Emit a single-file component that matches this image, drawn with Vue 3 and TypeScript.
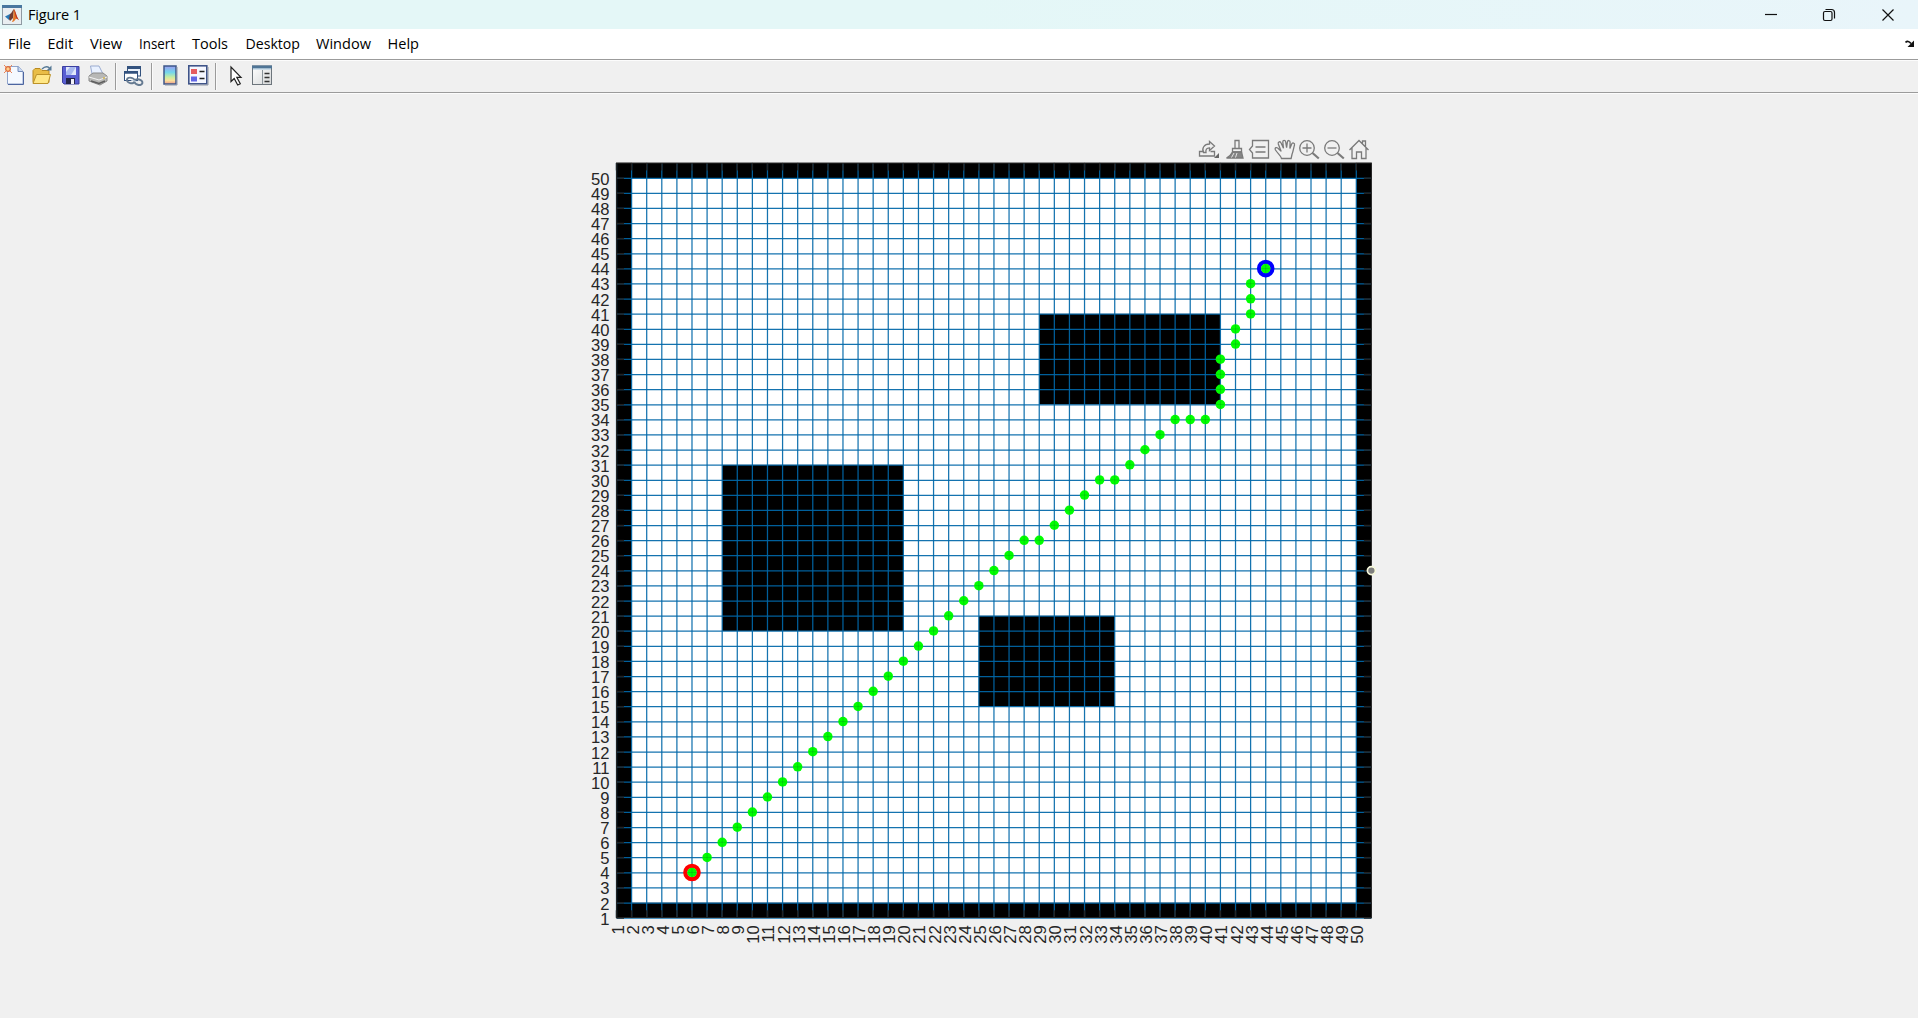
<script setup lang="ts">
interface MenuEntry {
  label: string
  left: number
  width: number
}

interface Block {
  x1: number
  y1: number
  x2: number
  y2: number
}

const menus: MenuEntry[] = [
  { label: 'File', left: 8, width: 23 },
  { label: 'Edit', left: 47.5, width: 25.5 },
  { label: 'View', left: 90, width: 32 },
  { label: 'Insert', left: 139, width: 36 },
  { label: 'Tools', left: 192, width: 36 },
  { label: 'Desktop', left: 245.5, width: 54.5 },
  { label: 'Window', left: 316, width: 55 },
  { label: 'Help', left: 387.5, width: 31.5 },
]

const pitch = 15.098
const px = (v: number): number => 616.5 + (v - 1) * pitch
const py = (v: number): number => 917.8 - (v - 1) * pitch

const ticks: number[] = Array.from({ length: 50 }, (_, i) => i + 1)

const blocks: Block[] = [
  { x1: 1, y1: 1, x2: 51, y2: 2 },
  { x1: 1, y1: 50, x2: 51, y2: 51 },
  { x1: 1, y1: 1, x2: 2, y2: 51 },
  { x1: 50, y1: 1, x2: 51, y2: 51 },
  { x1: 8, y1: 20, x2: 20, y2: 31 },
  { x1: 25, y1: 15, x2: 34, y2: 21 },
  { x1: 29, y1: 35, x2: 41, y2: 41 },
]

const diagonal: [number, number][] = Array.from({ length: 23 }, (_, i) => [6 + i, 4 + i])
const path: [number, number][] = [
  ...diagonal,
  [29, 26], [30, 27], [31, 28], [32, 29], [33, 30], [34, 30], [35, 31], [36, 32],
  [37, 33], [38, 34], [39, 34], [40, 34], [41, 35], [41, 36], [41, 37], [41, 38],
  [42, 39], [42, 40], [43, 41], [43, 42], [43, 43], [44, 44],
]
</script>

<template>
  <div class="window">
    <header class="titlebar">
      <svg class="logo" width="20" height="20" viewBox="0 0 20 20">
        <rect x=".5" y=".5" width="19" height="19" fill="#e9eef1" stroke="#8f9aa2" />
        <rect x="0" y="0" width="20" height="3" fill="#48779f" />
        <path d="M3 11.500 8 9l2 2.500L7 15z" fill="#2879b5" />
        <path d="M8 9c2-1 2.500-4 4-5l-1 9-3 3-1-2z" fill="#713b32" />
        <path d="M12 4c1.500 1 2.500 8 5 11-2-2-3-1.500-4 0s-2 2-3 2c2-3 1-9 2-13z" fill="#e57826" />
        <path d="M12 4c2 3 2 7 5 11-2-1-3-2-3.500-4z" fill="#b8302a" />
      </svg>
      <span class="title">Figure 1</span>
      <svg class="controls" width="140" height="28" viewBox="1760 0 140 28" fill="none" stroke="#111" stroke-width="1.200">
        <path d="M1765 13.500h12" />
        <rect x="1823.500" y="10.500" width="8.500" height="9" rx="1.500" />
        <path d="M1825.500 8.500h6a3 3 0 0 1 3 3v6" />
        <path d="M1882.500 8.500l11 11M1893.500 8.500l-11 11" />
      </svg>
    </header>

    <nav class="menubar">
      <svg width="440" height="30" viewBox="0 0 440 30">
        <text
          v-for="m in menus"
          :key="m.label"
          :x="m.left"
          y="20"
          :textLength="m.width"
          lengthAdjust="spacingAndGlyphs"
        >{{ m.label }}</text>
      </svg>
      <svg class="dock" width="10" height="8" viewBox="0 0 10 8">
        <path d="M.5 2.500Q3 0 6 3.500" fill="none" stroke="#111" stroke-width="1.700" />
        <path d="M9 .5v6.500H2.500z" fill="#111" />
      </svg>
    </nav>

    <div class="toolbar">
      <svg width="290" height="32" viewBox="0 60 290 32">
        <g>
          <path d="M7.500 66.500h11l4.500 5v12.500H7.500z" fill="#f5f9ff" stroke="#8fa3cb" />
          <path d="M23.500 72v12.500H8" fill="none" stroke="#4c65a0" />
          <path d="M18 66.500v5h5" fill="#c9d9f2" stroke="#7088b8" />
          <circle cx="8" cy="69" r="2.300" fill="#ffd08d" stroke="#df6a3a" stroke-width="1.300" />
          <path d="M4 65l2 2M12 65l-2 2M4 73l2-2M12 73l-2-2" stroke="#e88458" />
        </g>
        <g>
          <path d="M33 82.500v-12l2-2h5l2 2h7v12z" fill="#e9bd46" stroke="#b98a22" />
          <path d="M33 83.500l3.500-9h14L48 83.500z" fill="#ffe786" stroke="#bd9228" />
          <path d="M42 69q4-4 7.500-1" fill="none" stroke="#587a96" stroke-width="1.400" />
          <path d="M51.500 65.500v5h-5z" fill="#587a96" />
        </g>
        <g>
          <path d="M62.500 66.500h16.500v17.500H64l-1.500-1.500z" fill="#5a5fd2" stroke="#3b3fa0" />
          <path d="M66 67h10v8H66z" fill="#e1e8fb" />
          <path d="M70 67h6l-5 8h-5v-3z" fill="#a8b9ef" />
          <path d="M66 78h9v6h-9z" fill="#24264a" />
          <path d="M71 79h3v5h-3z" fill="#f3f3fa" />
        </g>
        <g>
          <path d="M92.500 76l-2-10h8.500l4.500 9z" fill="#e9f1ff" stroke="#9aabd0" />
          <path d="M89 76l4-3h10l4 3v5l-7 4-11-4z" fill="#b8b8b6" stroke="#8a8a8a" />
          <path d="M89 77l10 3 8-3" fill="none" stroke="#f4f4f4" />
          <path d="M91 81l8 2.500 6-2.500" fill="none" stroke="#5e5e5e" stroke-width="1.400" />
          <circle cx="104" cy="78" r="1" fill="#cfb24b" />
        </g>
        <g fill="#fff" stroke="#33527e">
          <rect x="127.500" y="66.500" width="13" height="9.500" fill="#eaf1fa" />
          <path d="M127 67.500h14" stroke-width="3" />
          <rect x="124.500" y="71.500" width="13" height="9" />
          <path d="M124 72.500h14" stroke-width="2.500" />
          <g fill="none" stroke="#657a91" stroke-width="2">
            <ellipse cx="131" cy="80.500" rx="4" ry="2.700" transform="rotate(15 131 80)" />
            <ellipse cx="138.500" cy="82" rx="4" ry="2.700" transform="rotate(15 138 82)" />
          </g>
          <path d="M131 80l7 2" stroke="#d8e3ed" stroke-width="1" />
        </g>
        <defs>
          <linearGradient id="spectrum" x1="0" y1="0" x2="0" y2="1">
            <stop offset="0" stop-color="#9d9cf0" />
            <stop offset=".35" stop-color="#72d6ed" />
            <stop offset=".62" stop-color="#c7eda0" />
            <stop offset=".8" stop-color="#fae19b" />
            <stop offset="1" stop-color="#ec9a8b" />
          </linearGradient>
          <linearGradient id="panel" x1="0" y1="0" x2="1" y2="1">
            <stop offset="0" stop-color="#fff" />
            <stop offset="1" stop-color="#d5d7d8" />
          </linearGradient>
        </defs>
        <rect x="164" y="66" width="12" height="18" fill="url(#spectrum)" stroke="#3d5789" stroke-width="1.500" />
        <path d="M177 67v18h-12" fill="none" stroke="#8d95a4" />
        <g>
          <rect x="188.800" y="65.800" width="18" height="18" fill="#f5f7ff" stroke="#3f5489" stroke-width="1.600" />
          <path d="M208 67v18h-18" fill="none" stroke="#8d95a4" />
          <path d="M191 69h6v5h-6z" fill="#e45c60" />
          <path d="M191 76.500h6v5h-6z" fill="#6266e4" />
          <path d="M199.500 71.500h5M199.500 78.500h5" stroke="#222" stroke-width="1.500" />
        </g>
        <path d="M231 67v14.500l3.200-3 3.500 6.500 2.600-1.200-3.500-6.500h4.200z" fill="#fff" stroke="#222" stroke-width="1.200" />
        <g>
          <rect x="252.500" y="66" width="19" height="18.500" fill="url(#panel)" stroke="#6d757c" />
          <path d="M252 67h20" stroke="#4f7596" stroke-width="3" />
          <path d="M253 69h18" stroke="#a9c9df" />
          <path d="M262.500 70v14" stroke="#8b949a" />
          <path d="M264.500 73.500h5M264.500 77.500h5M264.500 81.500h5" stroke="#333" stroke-width="1.400" />
        </g>
        <path d="M115.500 63v27M151.500 63v27M215.500 63v27" stroke="#9b9b9b" />
        <path d="M116.500 63v27M152.500 63v27M216.500 63v27" stroke="#fafafa" />
      </svg>
    </div>

    <main class="figure">
      <svg class="axes-tools" width="180" height="24" viewBox="1195 138 180 24" fill="none" stroke="#7a7a7a" stroke-width="1.300">
        <g>
          <path d="M1203.500 151.500h-4v4.500h15v-4.500h-4" />
          <path d="M1203.500 152.500c-2-4 .5-8.500 6-8.500v-2.500l5 4.500-5 4.500v-2.700c-3 0-4 1.700-3.500 4.700z" />
          <path d="M1219 153v5h-5z" fill="#666" stroke="none" />
        </g>
        <g>
          <path d="M1235 140.500h4v8h-4zM1232.500 148.500h9v3.500h-9z" />
          <path d="M1232.500 152h9l1.500 6h-16.500q4-2 6-6z" fill="#858585" />
          <path d="M1231.500 157.500l2.500-4.500M1235.500 157.500l1.500-4.500" stroke="#ededed" stroke-width=".9" />
        </g>
        <path d="M1252.500 140.500h16v17.500h-16v-5l-3-3.500 3-3.500zM1255.500 147h10M1255.500 152h10" />
        <path d="M1281.500 158.500c-1-3.500-3.500-4.500-6-8.500-1.300-2.300 1.300-3.500 3.300-1l2.400 2.400-2.900-7.400c-.6-2.500 2-3 2.800-1l2.400 5.200-.7-6.200c0-2.100 2.600-2.100 2.900 0l.9 5.700.8-5.700c.3-2.100 2.800-1.900 2.700.2l-.2 6.300 1.800-4.500c.8-1.900 3.300-1 2.800 1-1 3.100-1.200 6.500-2.400 9l-1 4.500z" />
        <g>
          <circle cx="1307" cy="148" r="7.300" />
          <path d="M1302.500 148h9M1307 143.500v9" />
          <path d="M1312.500 153l6.300 5.500" stroke-width="2.200" />
        </g>
        <g>
          <circle cx="1332" cy="148" r="7.300" />
          <path d="M1327.500 148h9" />
          <path d="M1337.500 153l6.300 5.500" stroke-width="2.200" />
        </g>
        <path d="M1349.500 150l9.500-9.500 9.500 9.500M1352 148v10.500h4.500v-6.500h5v6.500h4.500V148M1362.500 144v-3h3v6" />
      </svg>

      <svg class="plot" width="830" height="800" viewBox="580 162 830 800">
        <rect :x="px(1)" :y="py(51)" :width="50 * pitch" :height="50 * pitch" fill="#fff" />
        <rect
          v-for="(b, i) in blocks"
          :key="'b' + i"
          :x="px(b.x1)"
          :y="py(b.y2)"
          :width="(b.x2 - b.x1) * pitch"
          :height="(b.y2 - b.y1) * pitch"
          fill="#000"
        />
        <g stroke="#0067a8" stroke-width="1.250" stroke-opacity=".92">
          <template v-for="t in ticks" :key="'g' + t">
            <line :x1="px(t)" :x2="px(t)" :y1="py(1)" :y2="py(51)" />
            <line :x1="px(1)" :x2="px(51)" :y1="py(t) + 0.300" :y2="py(t) + 0.300" />
          </template>
        </g>
        <g stroke="#232323" stroke-width="1.400">
          <template v-for="t in ticks" :key="'t' + t">
            <line :x1="px(t)" :x2="px(t)" :y1="py(1)" :y2="py(1) - 7.500" />
            <line :x1="px(t)" :x2="px(t)" :y1="py(51)" :y2="py(51) + 7.500" />
            <line :x1="px(1)" :x2="px(1) + 7.500" :y1="py(t) + 0.200" :y2="py(t) + 0.200" />
            <line :x1="px(51)" :x2="px(51) - 7.500" :y1="py(t) + 0.200" :y2="py(t) + 0.200" />
          </template>
          <rect :x="px(1)" :y="py(51) + 0.200" :width="50 * pitch" :height="50 * pitch - 0.500" fill="none" stroke-width="1" />
        </g>
        <g class="tick-text">
          <text v-for="t in ticks" :key="'y' + t" x="609.500" :y="Math.round(py(t) + 6.800)" text-anchor="end">{{ t }}</text>
          <text
            v-for="t in ticks"
            :key="'x' + t"
            :transform="`translate(${Math.round(px(t) + 7)} 925.300) rotate(-90)`"
            text-anchor="end"
          >{{ t }}</text>
        </g>
        <circle :cx="px(6)" :cy="py(4)" r="6.700" fill="none" stroke="#f00" stroke-width="4.200" />
        <circle :cx="px(44)" :cy="py(44)" r="6.700" fill="none" stroke="#00f" stroke-width="4.200" />
        <g v-for="(p, i) in path" :key="'p' + i">
          <circle :cx="px(p[0])" :cy="py(p[1])" r="4.750" fill="#0f0" />
          <path :d="`M${px(p[0]) - 4} ${py(p[1])}h8M${px(p[0])} ${py(p[1]) - 4}v8`" stroke="#007a20" stroke-opacity=".28" />
        </g>
        <circle cx="1371.400" cy="570.600" r="4" fill="#7f7f7f" stroke="#f7f9dc" stroke-width="1.700" />
      </svg>
    </main>
  </div>
</template>

<style>
body {
  margin: 0;
  background: #f0f0f0;
  overflow: hidden;
}
</style>

<style scoped>
.window {
  width: 1918px;
  height: 1018px;
  display: flex;
  flex-direction: column;
  overflow: hidden;
  background: #f0f0f0;
  color: #000;
  font-family: "Open Sans", "Noto Sans", sans-serif;
}
.window svg {
  display: block;
  flex: none;
}
.titlebar {
  height: 29px;
  flex: none;
  display: flex;
  align-items: center;
  box-sizing: border-box;
  padding: 0 18px 0 2px;
  background: linear-gradient(90deg, #e4f7f7 0%, #e4f7f7 50%, #e9f5fa 100%);
}
.title {
  margin-left: 6px;
  font-size: 14.5px;
  line-height: 27px;
  margin-bottom: 1px;
  letter-spacing: -0.15px;
}
.controls {
  margin-left: auto;
}
.menubar {
  height: 30px;
  flex: none;
  display: flex;
  justify-content: space-between;
  background: #fff;
  font-size: 14.5px;
}
.dock {
  margin: 11px 3px 0 0;
}
.toolbar {
  height: 32px;
  flex: none;
  border-top: 1px solid #9b9b9b;
  border-bottom: 1px solid #9b9b9b;
  box-shadow: inset 0 1px 0 #fcfcfc, 0 1px 0 #fcfcfc;
}
.figure {
  flex: 1;
  display: flex;
  flex-direction: column;
  padding: 45px 0 0 580px;
}
.axes-tools {
  margin-left: 615px;
}
.tick-text {
  font-family: "Liberation Sans", Arial, sans-serif;
  font-size: 16.6px;
  fill: #262626;
}
</style>
